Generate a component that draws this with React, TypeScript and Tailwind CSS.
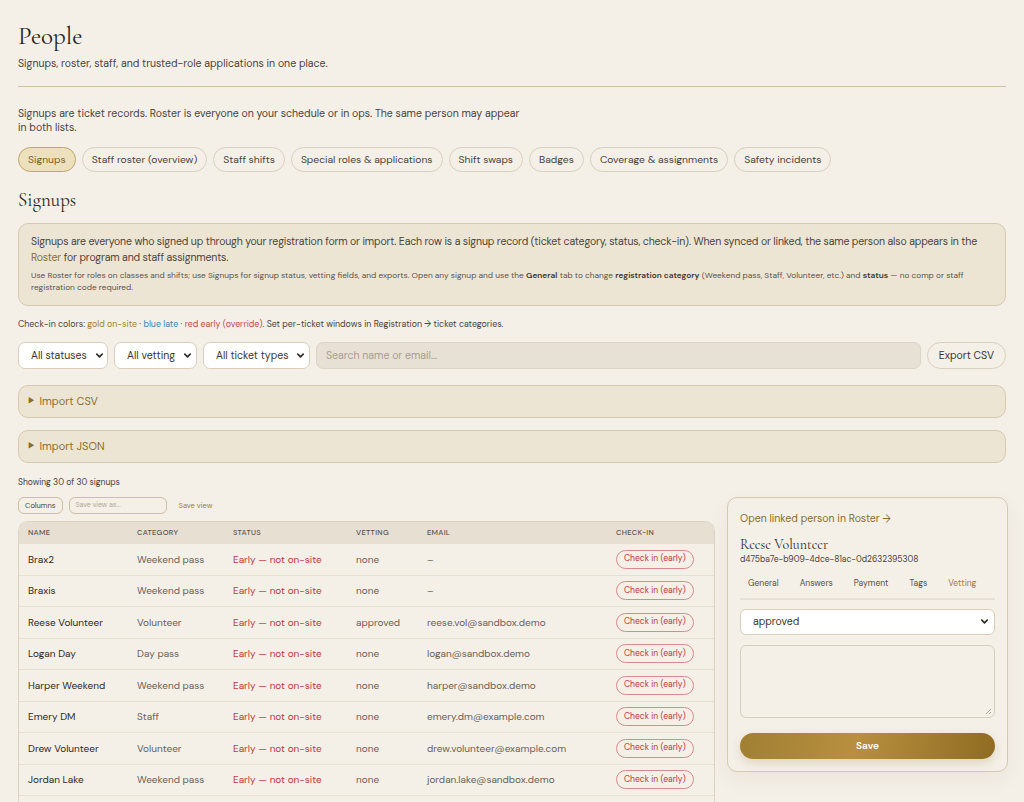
import { useState } from "react";

const tabs = [
  "Signups",
  "Staff roster (overview)",
  "Staff shifts",
  "Special roles & applications",
  "Shift swaps",
  "Badges",
  "Coverage & assignments",
  "Safety incidents",
];

const rows = [
  { name: "Brax2", category: "Weekend pass", vetting: "none", email: "–" },
  { name: "Braxis", category: "Weekend pass", vetting: "none", email: "–" },
  { name: "Reese Volunteer", category: "Volunteer", vetting: "approved", email: "reese.vol@sandbox.demo" },
  { name: "Logan Day", category: "Day pass", vetting: "none", email: "logan@sandbox.demo" },
  { name: "Harper Weekend", category: "Weekend pass", vetting: "none", email: "harper@sandbox.demo" },
  { name: "Emery DM", category: "Staff", vetting: "none", email: "emery.dm@example.com" },
  { name: "Drew Volunteer", category: "Volunteer", vetting: "none", email: "drew.volunteer@example.com" },
  { name: "Jordan Lake", category: "Weekend pass", vetting: "none", email: "jordan.lake@sandbox.demo" },
  { name: "Sam Rivera", category: "Weekend pass", vetting: "none", email: "sam@sandbox.demo" },
];

const sans = "font-['DM_Sans','Inter','Liberation_Sans',sans-serif]";
const serif = "font-['Cormorant_Garamond','Liberation_Serif','DejaVu_Serif',serif]";

function Chevron() {
  return (
    <svg width="9" height="9" viewBox="0 0 10 10" className="shrink-0">
      <path d="M2 3.5 5 6.5 8 3.5" fill="none" stroke="#2f2a25" strokeWidth="1.8" strokeLinecap="round" strokeLinejoin="round" />
    </svg>
  );
}

function Select({ label, className = "" }: { label: string; className?: string }) {
  return (
    <div className={`flex h-[27px] items-center justify-between gap-2 whitespace-nowrap rounded-[7px] border border-[#d9ceb9] bg-white pl-[12px] pr-[7px] text-[10.5px] text-[#3a342e] ${className}`}>
      <span>{label}</span>
      <Chevron />
    </div>
  );
}

function Disclosure({ label }: { label: string }) {
  return (
    <div className="flex h-[33px] items-center rounded-[10px] border border-[#d6c9ad] bg-[#ede5d4] px-[9px] text-[11px] text-[#8a6d2c]">
      <span className="mr-[5px] text-[7px]">▶</span>
      {label}
    </div>
  );
}

export default function App() {
  const [active, setActive] = useState("Signups");
  const [panelTab, setPanelTab] = useState("Vetting");

  return (
    <div className={`min-h-screen overflow-hidden bg-[#f4efe7] px-[18px] pt-[22px] text-[#3a342e] ${sans}`}>
      {/* header */}
      <h1 className={`${serif} text-[25px] leading-[28px] text-[#2a2520]`}>People</h1>
      <p className="mt-[6px] text-[10.5px] text-[#4a433c]">Signups, roster, staff, and trusted-role applications in one place.</p>
      <div className="mt-[14px] h-px bg-[#cdbf9f]" />

      <p className="mt-[20px] max-w-[512px] text-[10.5px] leading-[14px] text-[#4a433c]">
        Signups are ticket records. Roster is everyone on your schedule or in ops. The same person may appear in both lists.
      </p>

      <div className="mt-[12px] flex flex-wrap gap-[6px]">
        {tabs.map((t) => (
          <button
            key={t}
            onClick={() => setActive(t)}
            className={`h-[25px] rounded-full border px-[9px] text-[10.3px] ${
              active === t
                ? "border-[#bfa66a] bg-[#ede0bd] text-[#7c6224]"
                : "border-[#d9cfbd] bg-[#f4efe7] text-[#4a433c]"
            }`}
          >
            {t}
          </button>
        ))}
      </div>

      <h2 className={`${serif} mt-[16px] text-[19px] leading-[24px] text-[#2a2520]`}>Signups</h2>

      <div className="mt-[11px] rounded-[10px] border border-[#d6c9ad] bg-[#ede5d4] px-[12px] pb-[11px] pt-[10px]">
        <p className="text-[10.5px] leading-[16px] tracking-[-0.15px] text-[#4a433c]">
          Signups are everyone who signed up through your registration form or import. Each row is a signup record (ticket category, status, check-in). When synced or linked, the same person also appears in the{" "}
          <span className="text-[#8a6d2c]">Roster</span> for program and staff assignments.
        </p>
        <p className="mt-[4px] text-[8.3px] leading-[12px] text-[#5a524a]">
          Use Roster for roles on classes and shifts; use Signups for signup status, vetting fields, and exports. Open any signup and use the{" "}
          <b className="font-semibold text-[#3a342e]">General</b> tab to change{" "}
          <b className="font-semibold text-[#3a342e]">registration category</b> (Weekend pass, Staff, Volunteer, etc.) and{" "}
          <b className="font-semibold text-[#3a342e]">status</b> — no comp or staff registration code required.
        </p>
      </div>

      <p className="mt-[12px] text-[8.8px] text-[#4a433c]">
        Check-in colors: <span className="text-[#a08434]">gold on-site</span> · <span className="text-[#3d86b8]">blue late</span> ·{" "}
        <span className="text-[#c84a4a]">red early (override)</span>. Set per-ticket windows in Registration → ticket categories.
      </p>

      {/* filters */}
      <div className="mt-[11px] flex items-center gap-[6px]">
        <Select label="All statuses" className="w-[90px]" />
        <Select label="All vetting" className="w-[83px]" />
        <Select label="All ticket types" className="w-[107px]" />
        <div className="flex h-[27px] flex-1 items-center rounded-[7px] border border-[#ddd4c3] bg-[#e7e0d4] px-[9px] text-[10.5px] text-[#a79e92]">
          Search name or email...
        </div>
        <button className="h-[27px] rounded-full border border-[#d9cfbd] px-[11px] text-[10.5px] text-[#3a342e]">Export CSV</button>
      </div>

      <div className="mt-[16px] flex flex-col gap-[12px]">
        <Disclosure label="Import CSV" />
        <Disclosure label="Import JSON" />
      </div>

      <p className="mt-[14px] text-[8.5px] text-[#4a433c]">Showing 30 of 30 signups</p>

      <div className="mt-[7px] flex items-start gap-[12px]">
        {/* table side */}
        <div className="w-[697px] shrink-0">
          <div className="flex items-center gap-[6px]">
            <button className="h-[17px] rounded-[6px] border border-[#cdbf9f] px-[6px] text-[7.5px] text-[#4a433c]">Columns</button>
            <div className="flex h-[17px] w-[98px] items-center rounded-[6px] border border-[#cdbf9f] px-[6px] text-[7px] text-[#b0a799]">Save view as...</div>
            <span className="ml-[6px] text-[7.5px] text-[#a08434]">Save view</span>
          </div>

          <div className="mt-[7px] overflow-hidden rounded-t-[10px] border border-b-0 border-[#ddd3c2]">
            <table className="w-full table-fixed border-collapse text-left">
              <colgroup>
                <col className="w-[118px]" />
                <col className="w-[96px]" />
                <col className="w-[123px]" />
                <col className="w-[71px]" />
                <col className="w-[189px]" />
                <col />
              </colgroup>
              <thead>
                <tr className="h-[22px] bg-[#e7e0d2] text-[7.5px] uppercase tracking-[0.3px] text-[#5a524a]">
                  <th className="pl-[9px] font-medium">Name</th>
                  <th className="font-medium">Category</th>
                  <th className="font-medium">Status</th>
                  <th className="font-medium">Vetting</th>
                  <th className="font-medium">Email</th>
                  <th className="font-medium">Check-in</th>
                </tr>
              </thead>
              <tbody>
                {rows.map((r) => (
                  <tr key={r.name} className="h-[31.5px] border-t border-[#e6dfd2] text-[10px]">
                    <td className="pl-[9px] text-[#2f2a25]">{r.name}</td>
                    <td className="text-[#6a6259]">{r.category}</td>
                    <td className="text-[#c0393b]">Early — not on-site</td>
                    <td className="text-[#6a6259]">{r.vetting}</td>
                    <td className="text-[#6a6259]">{r.email}</td>
                    <td>
                      <span className="inline-flex h-[19px] items-center rounded-full border border-[#d98a8a] px-[7px] text-[8.5px] text-[#c0393b]">
                        Check in (early)
                      </span>
                    </td>
                  </tr>
                ))}
              </tbody>
            </table>
          </div>
        </div>

        {/* detail panel */}
        <div className="w-[281px] shrink-0 rounded-[10px] border border-[#d6c9ad] bg-[#f4efe7] px-[12px] pb-[12px] pt-[13px] shadow-[0_8px_20px_rgba(120,100,60,0.06)]">
          <p className="text-[10.5px] text-[#8a6d2c]">Open linked person in Roster →</p>
          <p className={`${serif} mt-[11px] text-[14px] leading-[16px] text-[#2f2a25]`}>Reese Volunteer</p>
          <p className="mt-[1px] text-[8.5px] text-[#4a433c]">d475ba7e-b909-4dce-81ac-0d2632395308</p>

          <div className="mt-[11px] flex gap-[21px] border-b-[2px] border-[#e6dfd2] pb-[7px] pl-[8px] text-[8.5px]">
            {["General", "Answers", "Payment", "Tags", "Vetting"].map((t) => (
              <button
                key={t}
                onClick={() => setPanelTab(t)}
                className={panelTab === t ? "text-[#a08434]" : "text-[#5a524a]"}
              >
                {t}
              </button>
            ))}
          </div>

          <div className="mt-[9px] flex h-[26px] items-center justify-between rounded-[6px] border border-[#d9ceb9] bg-white pl-[12px] pr-[5px] text-[10.5px] text-[#3a342e]">
            <span>approved</span>
            <Chevron />
          </div>

          <div className="relative mt-[10px] h-[73px] rounded-[6px] border border-[#d6cec0] bg-[#f4efe7]">
            <svg width="7" height="7" viewBox="0 0 7 7" className="absolute bottom-[2px] right-[2px]">
              <path d="M6 1 1 6M6 4 4 6" stroke="#9a948a" strokeWidth="0.8" />
            </svg>
          </div>

          <button className="mt-[15px] h-[26px] w-full rounded-full bg-[linear-gradient(100deg,#a07f33_0%,#b88f3f_45%,#8f6c22_100%)] text-[10px] font-semibold text-white shadow-[0_4px_10px_rgba(140,110,40,0.2)]">
            Save
          </button>
        </div>
      </div>
    </div>
  );
}
